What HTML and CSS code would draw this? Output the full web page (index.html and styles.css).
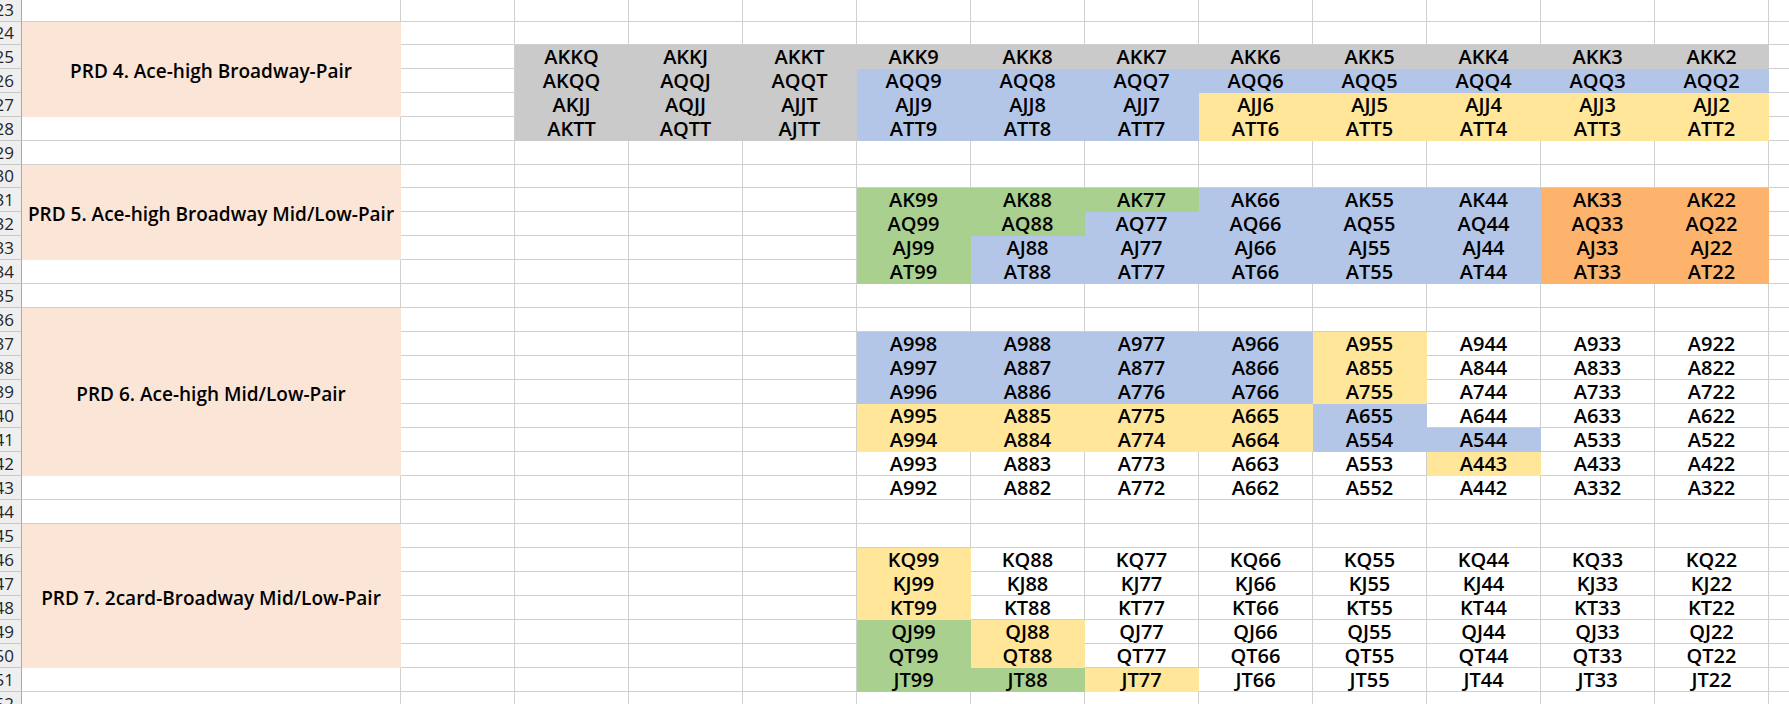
FILE: index.html
```html
<!DOCTYPE html>
<html lang="en">
<head>
<meta charset="utf-8">
<title>PRD ranges</title>
<link rel="stylesheet" href="styles.css">
</head>
<body>
<div class="sheet">
  <div class="row"><span class="rh">23</span><span></span><span></span><span></span><span></span><span></span><span></span><span></span><span></span><span></span><span></span><span></span><span></span><span></span><span></span></div>
  <div class="row"><span class="rh">24</span><span class="lab span4">PRD 4. Ace-high Broadway-Pair</span><span></span><span></span><span></span><span></span><span></span><span></span><span></span><span></span><span></span><span></span><span></span><span></span><span></span></div>
  <div class="row"><span class="rh">25</span><span></span><span class="g">AKKQ</span><span class="g">AKKJ</span><span class="g">AKKT</span><span class="g">AKK9</span><span class="g">AKK8</span><span class="g">AKK7</span><span class="g">AKK6</span><span class="g">AKK5</span><span class="g">AKK4</span><span class="g">AKK3</span><span class="g">AKK2</span><span></span></div>
  <div class="row"><span class="rh">26</span><span></span><span class="g">AKQQ</span><span class="g">AQQJ</span><span class="g">AQQT</span><span class="b">AQQ9</span><span class="b">AQQ8</span><span class="b">AQQ7</span><span class="b">AQQ6</span><span class="b">AQQ5</span><span class="b">AQQ4</span><span class="b">AQQ3</span><span class="b">AQQ2</span><span></span></div>
  <div class="row"><span class="rh">27</span><span></span><span class="g">AKJJ</span><span class="g">AQJJ</span><span class="g">AJJT</span><span class="b">AJJ9</span><span class="b">AJJ8</span><span class="b">AJJ7</span><span class="y">AJJ6</span><span class="y">AJJ5</span><span class="y">AJJ4</span><span class="y">AJJ3</span><span class="y">AJJ2</span><span></span></div>
  <div class="row"><span class="rh">28</span><span></span><span></span><span class="g">AKTT</span><span class="g">AQTT</span><span class="g">AJTT</span><span class="b">ATT9</span><span class="b">ATT8</span><span class="b">ATT7</span><span class="y">ATT6</span><span class="y">ATT5</span><span class="y">ATT4</span><span class="y">ATT3</span><span class="y">ATT2</span><span></span></div>
  <div class="row"><span class="rh">29</span><span></span><span></span><span></span><span></span><span></span><span></span><span></span><span></span><span></span><span></span><span></span><span></span><span></span><span></span></div>
  <div class="row"><span class="rh">30</span><span class="lab span4">PRD 5. Ace-high Broadway Mid/Low-Pair</span><span></span><span></span><span></span><span></span><span></span><span></span><span></span><span></span><span></span><span></span><span></span><span></span><span></span></div>
  <div class="row"><span class="rh">31</span><span></span><span></span><span></span><span></span><span class="gr">AK99</span><span class="gr">AK88</span><span class="gr">AK77</span><span class="b">AK66</span><span class="b">AK55</span><span class="b">AK44</span><span class="o">AK33</span><span class="o">AK22</span><span></span></div>
  <div class="row"><span class="rh">32</span><span></span><span></span><span></span><span></span><span class="gr">AQ99</span><span class="gr">AQ88</span><span class="b">AQ77</span><span class="b">AQ66</span><span class="b">AQ55</span><span class="b">AQ44</span><span class="o">AQ33</span><span class="o">AQ22</span><span></span></div>
  <div class="row"><span class="rh">33</span><span></span><span></span><span></span><span></span><span class="gr">AJ99</span><span class="b">AJ88</span><span class="b">AJ77</span><span class="b">AJ66</span><span class="b">AJ55</span><span class="b">AJ44</span><span class="o">AJ33</span><span class="o">AJ22</span><span></span></div>
  <div class="row"><span class="rh">34</span><span></span><span></span><span></span><span></span><span></span><span class="gr">AT99</span><span class="b">AT88</span><span class="b">AT77</span><span class="b">AT66</span><span class="b">AT55</span><span class="b">AT44</span><span class="o">AT33</span><span class="o">AT22</span><span></span></div>
  <div class="row"><span class="rh">35</span><span></span><span></span><span></span><span></span><span></span><span></span><span></span><span></span><span></span><span></span><span></span><span></span><span></span><span></span></div>
  <div class="row"><span class="rh">36</span><span class="lab span7">PRD 6. Ace-high Mid/Low-Pair</span><span></span><span></span><span></span><span></span><span></span><span></span><span></span><span></span><span></span><span></span><span></span><span></span><span></span></div>
  <div class="row"><span class="rh">37</span><span></span><span></span><span></span><span></span><span class="b">A998</span><span class="b">A988</span><span class="b">A977</span><span class="b">A966</span><span class="y">A955</span><span>A944</span><span>A933</span><span>A922</span><span></span></div>
  <div class="row"><span class="rh">38</span><span></span><span></span><span></span><span></span><span class="b">A997</span><span class="b">A887</span><span class="b">A877</span><span class="b">A866</span><span class="y">A855</span><span>A844</span><span>A833</span><span>A822</span><span></span></div>
  <div class="row"><span class="rh">39</span><span></span><span></span><span></span><span></span><span class="b">A996</span><span class="b">A886</span><span class="b">A776</span><span class="b">A766</span><span class="y">A755</span><span>A744</span><span>A733</span><span>A722</span><span></span></div>
  <div class="row"><span class="rh">40</span><span></span><span></span><span></span><span></span><span class="y">A995</span><span class="y">A885</span><span class="y">A775</span><span class="y">A665</span><span class="b">A655</span><span>A644</span><span>A633</span><span>A622</span><span></span></div>
  <div class="row"><span class="rh">41</span><span></span><span></span><span></span><span></span><span class="y">A994</span><span class="y">A884</span><span class="y">A774</span><span class="y">A664</span><span class="b">A554</span><span class="b">A544</span><span>A533</span><span>A522</span><span></span></div>
  <div class="row"><span class="rh">42</span><span></span><span></span><span></span><span></span><span>A993</span><span>A883</span><span>A773</span><span>A663</span><span>A553</span><span class="y">A443</span><span>A433</span><span>A422</span><span></span></div>
  <div class="row"><span class="rh">43</span><span></span><span></span><span></span><span></span><span></span><span>A992</span><span>A882</span><span>A772</span><span>A662</span><span>A552</span><span>A442</span><span>A332</span><span>A322</span><span></span></div>
  <div class="row"><span class="rh">44</span><span></span><span></span><span></span><span></span><span></span><span></span><span></span><span></span><span></span><span></span><span></span><span></span><span></span><span></span></div>
  <div class="row"><span class="rh">45</span><span class="lab span6">PRD 7. 2card-Broadway Mid/Low-Pair</span><span></span><span></span><span></span><span></span><span></span><span></span><span></span><span></span><span></span><span></span><span></span><span></span><span></span></div>
  <div class="row"><span class="rh">46</span><span></span><span></span><span></span><span></span><span class="y">KQ99</span><span>KQ88</span><span>KQ77</span><span>KQ66</span><span>KQ55</span><span>KQ44</span><span>KQ33</span><span>KQ22</span><span></span></div>
  <div class="row"><span class="rh">47</span><span></span><span></span><span></span><span></span><span class="y">KJ99</span><span>KJ88</span><span>KJ77</span><span>KJ66</span><span>KJ55</span><span>KJ44</span><span>KJ33</span><span>KJ22</span><span></span></div>
  <div class="row"><span class="rh">48</span><span></span><span></span><span></span><span></span><span class="y">KT99</span><span>KT88</span><span>KT77</span><span>KT66</span><span>KT55</span><span>KT44</span><span>KT33</span><span>KT22</span><span></span></div>
  <div class="row"><span class="rh">49</span><span></span><span></span><span></span><span></span><span class="gr">QJ99</span><span class="y">QJ88</span><span>QJ77</span><span>QJ66</span><span>QJ55</span><span>QJ44</span><span>QJ33</span><span>QJ22</span><span></span></div>
  <div class="row"><span class="rh">50</span><span></span><span></span><span></span><span></span><span class="gr">QT99</span><span class="y">QT88</span><span>QT77</span><span>QT66</span><span>QT55</span><span>QT44</span><span>QT33</span><span>QT22</span><span></span></div>
  <div class="row"><span class="rh">51</span><span></span><span></span><span></span><span></span><span></span><span class="gr">JT99</span><span class="gr">JT88</span><span class="y">JT77</span><span>JT66</span><span>JT55</span><span>JT44</span><span>JT33</span><span>JT22</span><span></span></div>
  <div class="row"><span class="rh">52</span><span></span><span></span><span></span><span></span><span></span><span></span><span></span><span></span><span></span><span></span><span></span><span></span><span></span><span></span></div>
</div>
</body>
</html>
```
FILE: styles.css
```css
html, body {
  margin: 0;
  padding: 0;
  width: 1789px;
  height: 704px;
  overflow: hidden;
  background: #ffffff;
}

.sheet {
  display: grid;
  grid-template-columns: 40px 379px repeat(13, 114px);
  grid-template-rows: 24px 23px repeat(5, 24px) 23px repeat(22, 24px);
  margin: -2px 0 0 -18px;
  font-family: "Open Sans", "Noto Sans", "Liberation Sans", sans-serif;
  font-weight: 600;
  font-size: 20px;
  line-height: 22px;
  color: #000000;
}

.row {
  display: contents;
}

.row > span {
  box-sizing: border-box;
  display: flex;
  align-items: center;
  justify-content: center;
  border-right: 1px solid #d0d0d0;
  border-bottom: 1px solid #d0d0d0;
  white-space: nowrap;
}

.row > .rh {
  background: #efefef;
  border-bottom-color: #c8c8c8;
  border-right-color: #a8a8a8;
  justify-content: flex-end;
  padding-right: 7px;
  overflow: hidden;
  font-weight: 400;
  font-size: 17px;
  line-height: 20px;
  color: #262626;
}

.row > .lab {
  background: #fbe5d6;
  border-color: transparent;
  padding-top: 4px;
  font-size: 19px;
}

.span4 { grid-row: span 4; }
.span6 { grid-row: span 6; }
.span7 { grid-row: span 7; }

.row > .g  { background: #cacaca; border-color: transparent; }
.row > .b  { background: #b4c6e7; border-color: transparent; }
.row > .y  { background: #ffe699; border-color: transparent; }
.row > .gr { background: #a9d08e; border-color: transparent; }
.row > .o  { background: #fdb36b; border-color: transparent; }
```
